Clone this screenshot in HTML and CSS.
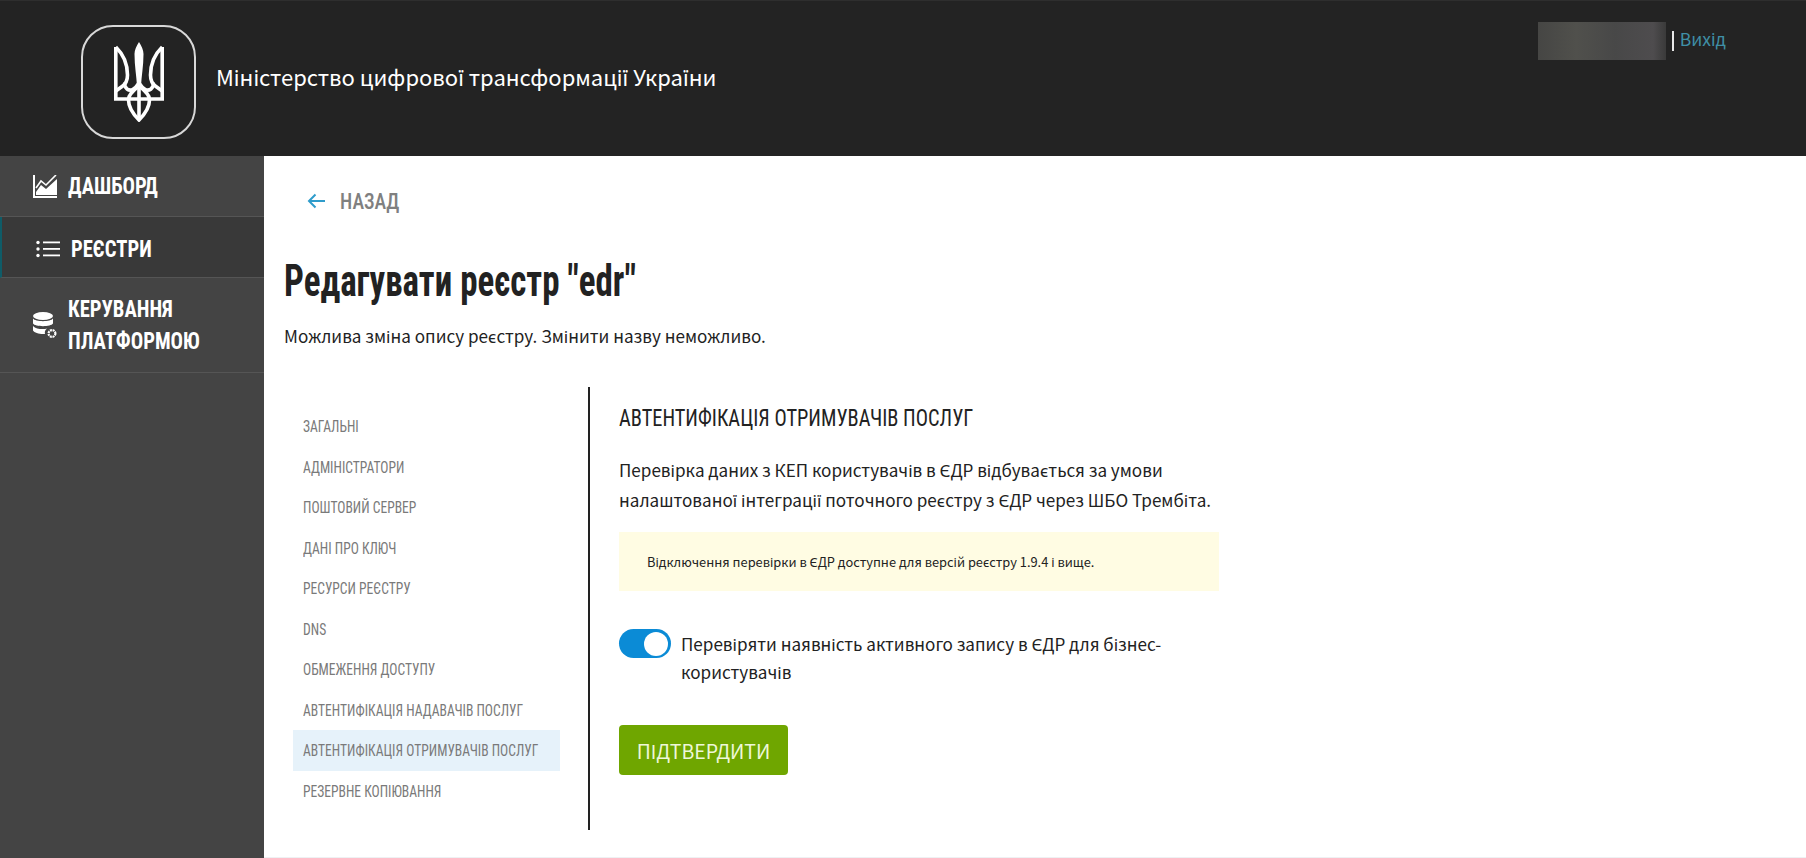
FILE: index.html
```html
<!DOCTYPE html>
<html lang="uk">
<head>
    <meta charset="UTF-8">
    <meta name="viewport" content="width=device-width, initial-scale=1.0">
    <link rel="stylesheet" href="styles.css">
</head>
<body>
    <header class="top-bar">
        <div class="brand">
            <div class="brand-logo">
                <svg width="50" height="80" viewBox="0 0 50 80" fill="none" stroke="#fff" stroke-width="3.600">
                    <path d="M25 0C27.500 4 29.500 8 29.500 12C29.500 24 27.500 34 27 44H23C22.500 34 20.500 24 20.500 12C20.500 8 22.500 4 25 0Z" fill="#fff" stroke="none"/>
                    <path d="M1.800 5V57H48.200V5"/>
                    <path d="M1.800 5C9 12 13.500 22 13.500 33C13.500 38 12 42 8 44.500L1.800 49"/>
                    <path d="M48.200 5C41 12 36.500 22 36.500 33C36.500 38 38 42 42 44.500L48.200 49"/>
                    <path d="M25 41C21 47 17 50 13 47C11 45 10 43 11 41"/>
                    <path d="M25 41C29 47 33 50 37 47C39 45 40 43 39 41"/>
                    <path d="M25 78C18 71 14.500 65 14.500 58C14.500 52 20 48 25 44C30 48 35.500 52 35.500 58C35.500 65 32 71 25 78Z"/>
                    <path d="M25 44V78"/>
                </svg>
            </div>
            <span class="brand-name">Міністерство цифрової трансформації України</span>
        </div>
        <div class="user-box">
            <div class="user-hidden"></div>
            <span class="user-sep"></span>
            <a class="logout" href="#">Вихід</a>
        </div>
    </header>

    <div class="page">
        <nav class="sidebar">
            <a class="side-item" href="#">
                <svg class="side-icon" width="24" height="23" viewBox="0 0 24 23">
                    <path d="M1 0V22H24" fill="none" stroke="#fff" stroke-width="2"/>
                    <path d="M3 13L8 6L13 10L23 0" fill="none" stroke="#fff" stroke-width="1.600"/>
                    <path d="M3 20V17L8 10L13 14L24 4V20Z" fill="#fff"/>
                </svg>
                <span class="cond">Дашборд</span>
            </a>
            <a class="side-item side-item-active" href="#">
                <svg class="side-icon" width="24" height="18" viewBox="0 0 24 18" fill="#fff">
                    <circle cx="2" cy="2.500" r="1.700"/>
                    <circle cx="2" cy="9" r="1.700"/>
                    <circle cx="2" cy="15.500" r="1.700"/>
                    <rect x="7" y="1.500" width="17" height="1.800"/>
                    <rect x="7" y="8" width="17" height="1.800"/>
                    <rect x="7" y="14.500" width="17" height="1.800"/>
                </svg>
                <span class="cond">Реєстри</span>
            </a>
            <a class="side-item side-item-tall" href="#">
                <svg class="side-icon" width="24" height="27" viewBox="0 0 24 27" fill="#fff">
                    <ellipse cx="10" cy="4" rx="10" ry="4"/>
                    <path d="M0 6.500C2 10 18 10 20 6.500V11.500C18 15 2 15 0 11.500Z"/>
                    <path d="M0 14C3 17.500 11 17.500 14 16.500C12 18 11.500 20 12 22C7 22.500 1.500 21 0 18.500Z"/>
                    <circle cx="19" cy="21.500" r="3.400" fill="none" stroke="#fff" stroke-width="2.200" stroke-dasharray="2 0.700"/>
                </svg>
                <span class="cond">Керування<br>платформою</span>
            </a>
        </nav>

        <main class="content">
            <a class="back-link" href="#">
                <svg width="18" height="16" viewBox="0 0 18 16" fill="none" stroke="#2f9ccb" stroke-width="2">
                    <path d="M18 8H2M8.500 1.500L2 8L8.500 14.500"/>
                </svg>
                <span class="cond">Назад</span>
            </a>
            <h1 class="page-title"><span class="cond">Редагувати реєстр "edr"</span></h1>
            <p class="page-note">Можлива зміна опису реєстру. Змінити назву неможливо.</p>

            <div class="settings">
                <ul class="settings-nav">
                    <li><span class="cond">Загальні</span></li>
                    <li><span class="cond">Адміністратори</span></li>
                    <li><span class="cond">Поштовий сервер</span></li>
                    <li><span class="cond">Дані про ключ</span></li>
                    <li><span class="cond">Ресурси реєстру</span></li>
                    <li><span class="cond">DNS</span></li>
                    <li><span class="cond">Обмеження доступу</span></li>
                    <li><span class="cond">Автентифікація надавачів послуг</span></li>
                    <li class="current"><span class="cond">Автентифікація отримувачів послуг</span></li>
                    <li><span class="cond">Резервне копіювання</span></li>
                </ul>
                <section class="settings-body">
                    <h2><span class="cond">Автентифікація отримувачів послуг</span></h2>
                    <p class="body-text">Перевірка даних з КЕП користувачів в ЄДР відбувається за умови налаштованої інтеграції поточного реєстру з ЄДР через ШБО Трембіта.</p>
                    <div class="warning">Відключення перевірки в ЄДР доступне для версій реєстру 1.9.4 і вище.</div>
                    <div class="switch-row">
                        <span class="switch"><span class="switch-knob"></span></span>
                        <span class="switch-label">Перевіряти наявність активного запису в ЄДР для бізнес-користувачів</span>
                    </div>
                    <button class="submit">Підтвердити</button>
                </section>
            </div>
        </main>
    </div>
</body>
</html>
```

FILE: styles.css
```css
* {
    box-sizing: border-box;
}

body {
    margin: 0;
    font-family: "Noto Sans CJK SC", "Noto Sans", sans-serif;
    color: #222;
    background-color: #fff;
}

a {
    text-decoration: none;
}

/* narrow heading face: condensed Roboto, squeezed a bit more per use */
.cond {
    display: inline-block;
    font-family: Roboto, sans-serif;
    font-stretch: 75%;
    white-space: nowrap;
    text-transform: uppercase;
    transform-origin: left center;
}

.top-bar {
    display: flex;
    justify-content: space-between;
    height: 156px;
    padding: 24px 80px 0 81px;
    background-color: #232323;
    border-top: 1px solid #2e2e2e;
}

.brand {
    display: flex;
    align-items: center;
    height: 114px;
    gap: 20px;
}

.brand-logo {
    display: flex;
    align-items: center;
    justify-content: center;
    width: 115px;
    height: 114px;
    border: 2px solid #d8d8d8;
    border-radius: 32px;
}

.brand-name {
    margin-bottom: 13px;
    font-size: 22px;
    line-height: 30px;
    color: #fff;
}

.user-box {
    display: flex;
    align-items: center;
    height: 38px;
    margin-top: -3px;
}

.user-hidden {
    width: 128px;
    height: 38px;
    background: linear-gradient(90deg, #464644, #50504c 30%, #484848 60%, #4e4c4e 90%, #3a3a3a);
}

.user-sep {
    width: 2px;
    height: 20px;
    margin: 0 6px;
    background-color: #e8e8e8;
}

.logout {
    margin-bottom: 4px;
    font-size: 17.500px;
    line-height: 24px;
    color: #3f8fa6;
}

.page {
    display: flex;
    height: 702px;
}

.sidebar {
    flex: 0 0 264px;
    background-color: #444;
}

.side-item {
    display: flex;
    align-items: center;
    height: 61px;
    padding-left: 33px;
    gap: 11px;
    color: #fff;
    border-bottom: 1px solid #555;
}

.side-item .cond {
    font-size: 24px;
    font-weight: 700;
    line-height: 32px;
    transform: scaleX(0.86);
}

.side-item-active {
    padding: 3px 0 0 34px;
    gap: 11px;
    background-color: #393939;
    border-left: 2px solid #0f5c68;
}

.side-item-tall {
    height: 95px;
}

.content {
    flex: 1;
    padding: 30px 0 0 20px;
    border-bottom: 1px solid #eef1f3;
}

.back-link {
    display: flex;
    align-items: center;
    gap: 15px;
    height: 30px;
    padding-left: 23px;
    color: #808080;
}

.back-link .cond {
    font-size: 22px;
    font-weight: 500;
    transform: scaleX(0.9);
}

.page-title {
    display: flex;
    align-items: center;
    height: 60px;
    margin: 35px 0 0;
    font-size: 44px;
    font-weight: 700;
    color: #222;
}

.page-title .cond {
    text-transform: none;
    transform: scaleX(0.795);
}

.page-note {
    margin: 12px 0 0;
    font-size: 17.100px;
    line-height: 26px;
}

.settings {
    display: flex;
    height: 443px;
    margin-top: 38px;
}

.settings-nav {
    flex: 0 0 306px;
    min-width: 0;
    margin: 0;
    padding: 19px 28px 0 9px;
    list-style: none;
    border-right: 2px solid #222;
}

.settings-nav li {
    display: flex;
    align-items: center;
    height: 40.500px;
    padding-left: 10px;
    color: #7a7a7a;
}

.settings-nav .cond {
    font-size: 17px;
    font-weight: 400;
    transform: scaleX(0.797);
}

.settings-nav .current {
    background-color: #e6f2fa;
}

.settings-body {
    width: 629px;
    padding: 16px 0 0 29px;
}

.settings-body h2 {
    display: flex;
    align-items: center;
    height: 30px;
    margin: 0;
    font-size: 24px;
    font-weight: 450;
    color: #222;
}

.settings-body h2 .cond {
    transform: scaleX(0.85);
}

.body-text {
    margin: 22px 0 0;
    font-size: 17.100px;
    line-height: 29.500px;
}

.warning {
    display: flex;
    align-items: center;
    height: 59px;
    margin-top: 18px;
    padding-left: 28px;
    font-size: 12.850px;
    background-color: #fffce3;
}

.switch-row {
    display: flex;
    gap: 10px;
    margin-top: 38px;
}

.switch {
    flex: 0 0 52px;
    display: flex;
    align-items: center;
    justify-content: flex-end;
    height: 29px;
    padding-right: 3px;
    border-radius: 15px;
    background-color: #0b8bd6;
}

.switch-knob {
    width: 24px;
    height: 24px;
    border-radius: 50%;
    background-color: #fff;
}

.switch-label {
    padding-top: 1px;
    font-size: 17.100px;
    line-height: 28px;
}

.submit {
    display: block;
    width: 169px;
    height: 50px;
    margin-top: 39px;
    font-family: inherit;
    font-size: 19.500px;
    text-transform: uppercase;
    color: #eef7d8;
    background-color: #6fa600;
    border: none;
    border-radius: 4px;
}
```
